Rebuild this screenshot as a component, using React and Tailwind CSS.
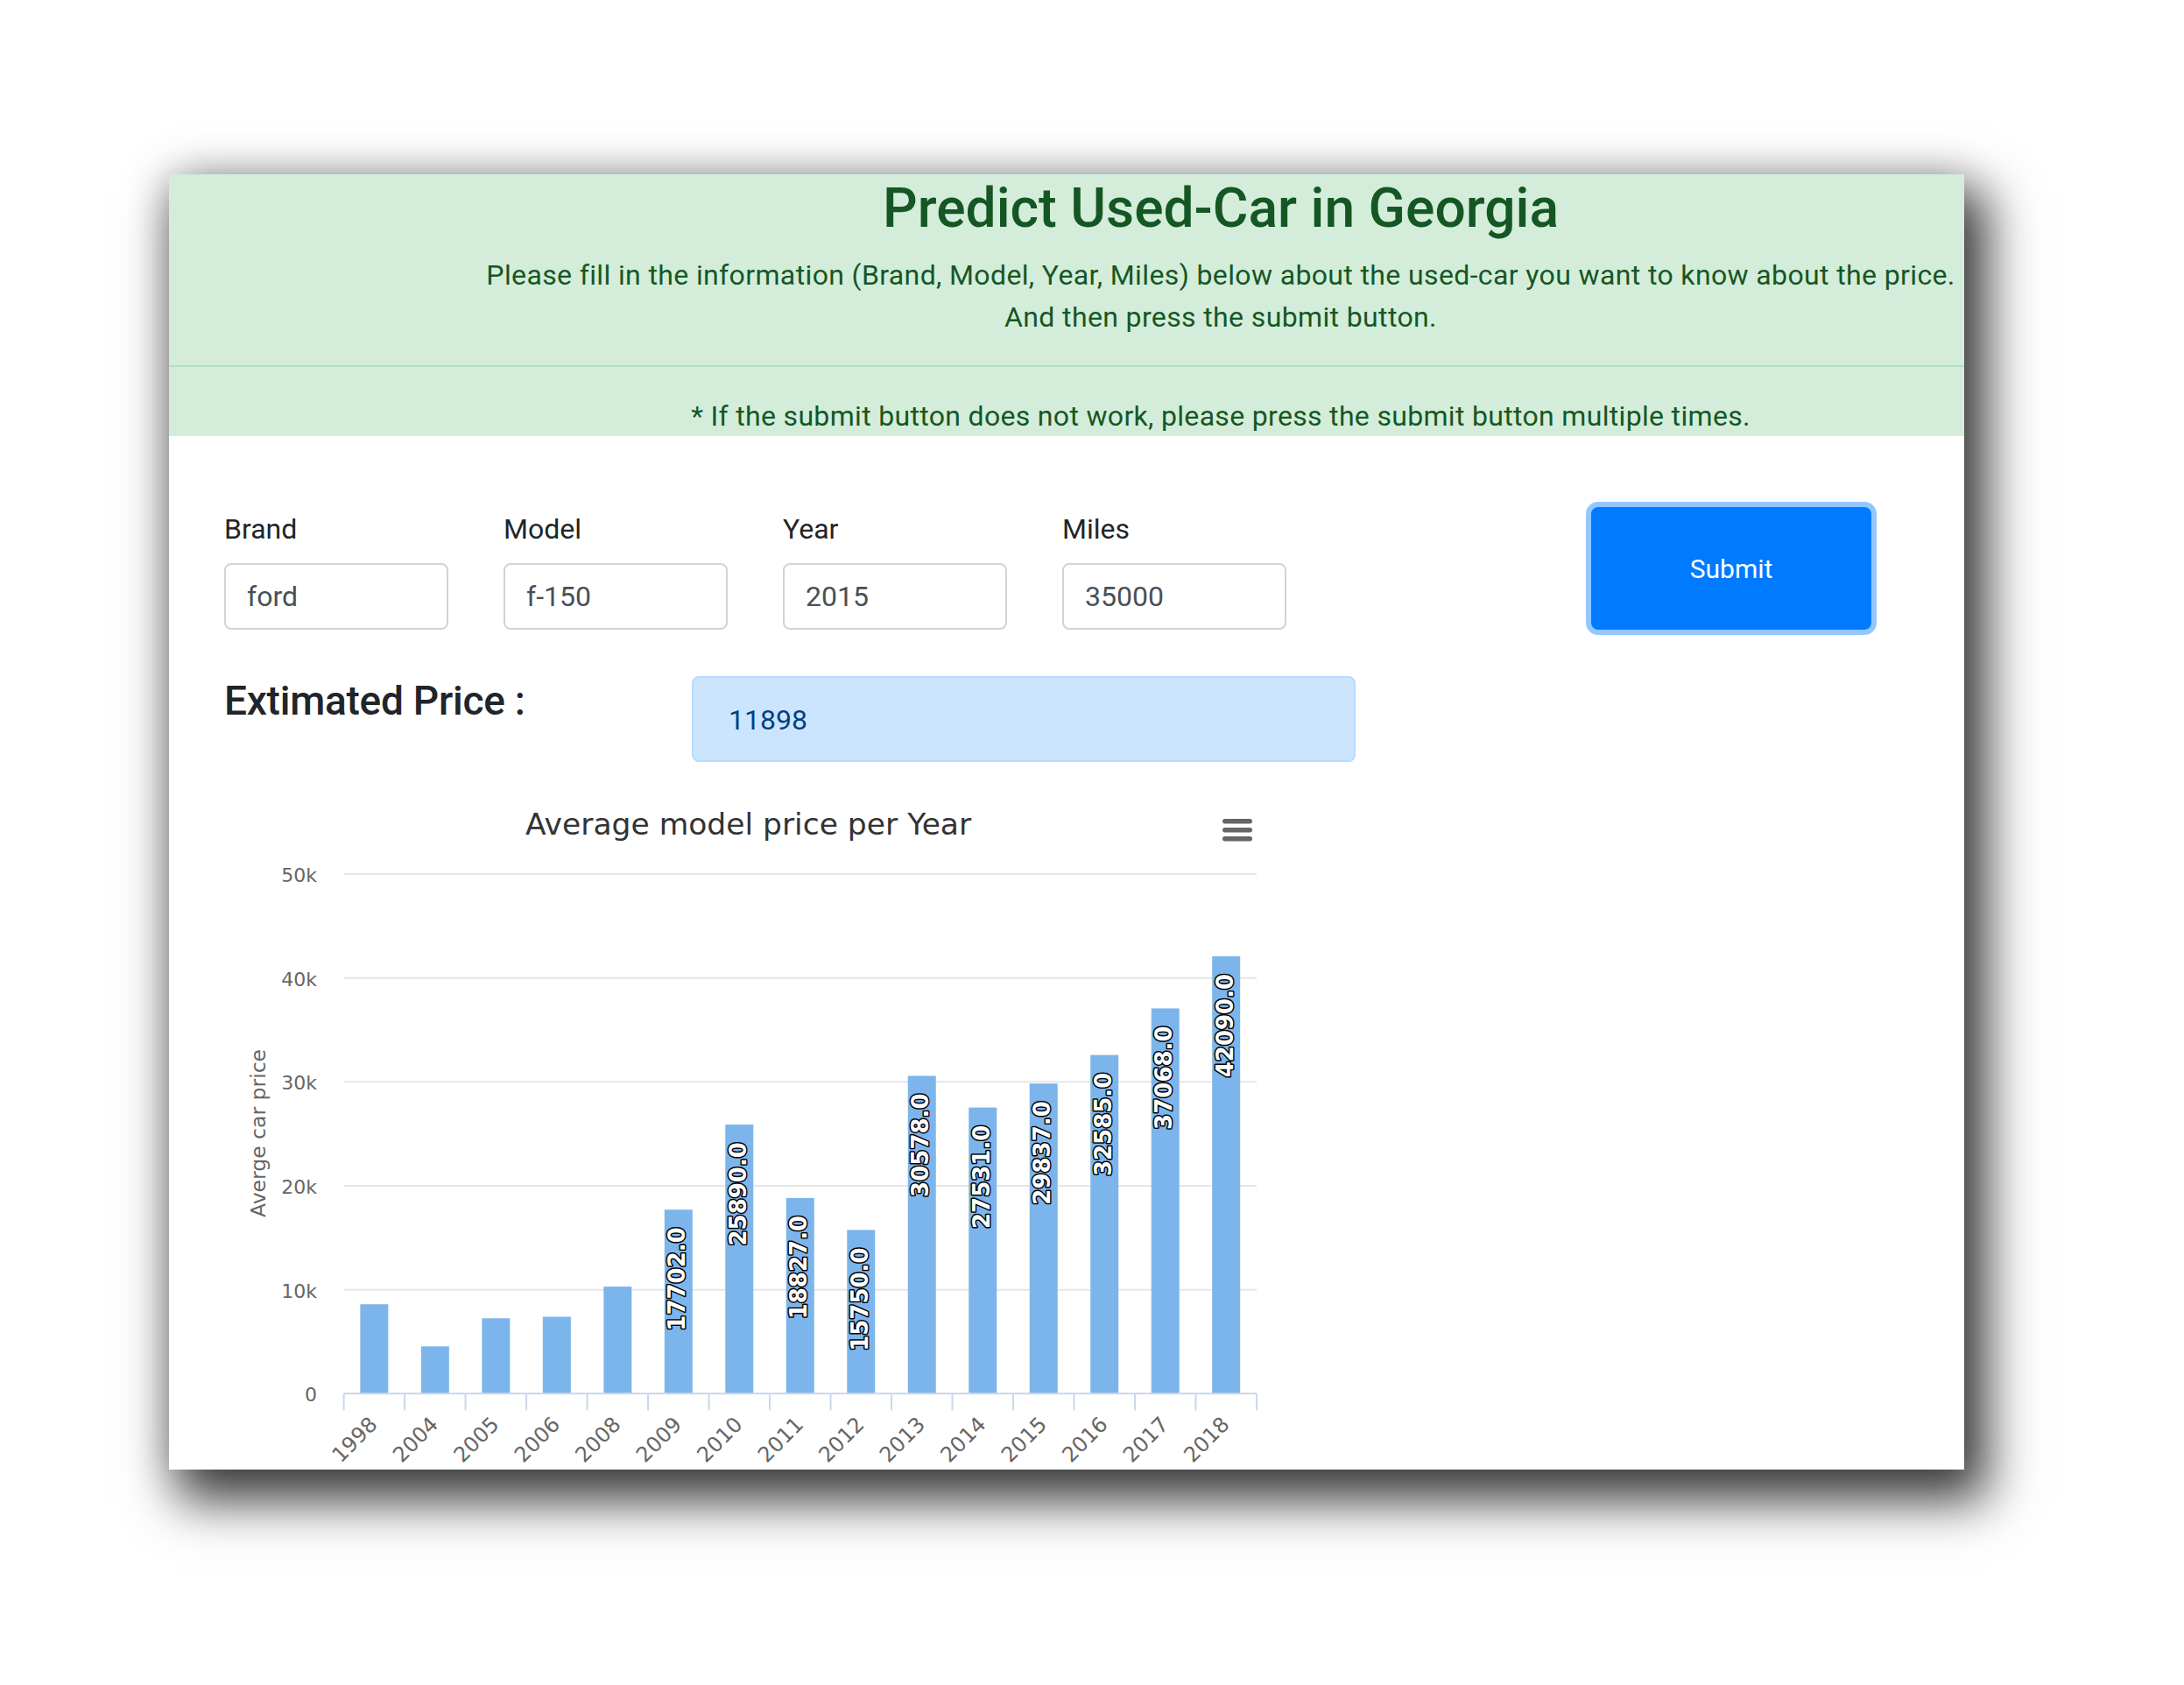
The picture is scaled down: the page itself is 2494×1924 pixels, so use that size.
import React from 'react';

const FIELDS = [
  { label: 'Brand', value: 'ford' },
  { label: 'Model', value: 'f-150' },
  { label: 'Year', value: '2015' },
  { label: 'Miles', value: '35000' },
];

const YEARS = ['1998', '2004', '2005', '2006', '2008', '2009', '2010', '2011', '2012', '2013', '2014', '2015', '2016', '2017', '2018'];
const PRICES = [8600, 4550, 7250, 7400, 10300, 17702, 25890, 18827, 15750, 30578, 27531, 29837, 32585, 37068, 42090];

// plot geometry (svg local px)
const X0 = 136.6;
const CAT = 69.49;
const Y0 = 710.3;
const STEP = 118.66; // per 10k
const BAR_W = 32;
const CHART_FONT = "'DejaVu Sans', Verdana, sans-serif";

export default function App() {
  return (
    <div className="h-[1924px] w-[2494px] overflow-hidden bg-white pl-[193px] pt-[199px] font-['Roboto',sans-serif]">
      <div className="h-[1479px] w-[2050px] overflow-hidden bg-white shadow-[18px_28px_55px_8px_rgba(0,0,0,0.75),0_0_45px_rgba(0,0,0,0.2)]">
        <Header />

        <div className="px-[63px] pt-[82px]">
          {/* Inputs + submit */}
          <div className="flex items-start">
            <div className="flex gap-[63px]">
              {FIELDS.map((f) => (
                <div key={f.label} className="w-[256px]">
                  <label className="block text-[32px] leading-[48px] text-[#212529]">{f.label}</label>
                  <input
                    readOnly
                    value={f.value}
                    className="mt-[15px] h-[76px] w-[256px] rounded-[8px] border-2 border-[#ced4da] bg-white px-[24px] text-[32px] leading-[48px] text-[#495057] outline-none"
                  />
                </div>
              ))}
            </div>
            <button className="ml-auto mr-[43px] -mt-px h-[140px] w-[320px] rounded-[8px] border-2 border-[#007bff] bg-[#007bff] text-[30px] text-white shadow-[0_0_0_6px_rgba(38,143,255,0.5)]">
              Submit
            </button>
          </div>

          {/* Result */}
          <div className="mt-[52px] flex items-start">
            <h4 className="w-[534px] text-[46px] font-medium leading-[59px] tracking-[-0.25px] text-[#212529]">Extimated Price :</h4>
            <div className="mt-px h-[98px] w-[758px] rounded-[8px] border-2 border-[#b8daff] bg-[#cce5ff] px-[40px] pt-[24px] text-[32px] leading-[48px] text-[#004085]">
              11898
            </div>
          </div>

          <PriceChart />
        </div>
      </div>
    </div>
  );
}

function Header() {
  return (
    <div className="h-[299px] bg-[#d4edda] text-[#155724]">
      <div className="flex flex-col items-center pl-[352px]">
        <h2 className="whitespace-nowrap text-[62.3px] font-medium leading-[77px]">Predict Used-Car in Georgia</h2>
        <p className="mt-[14px] whitespace-nowrap text-center text-[32px] leading-[48px] tracking-[0.37px]">
          Please fill in the information (Brand, Model, Year, Miles) below about the used-car you want to know about the price.
          <br />
          And then press the submit button.
        </p>
      </div>
      <hr className="mt-[31px] border-0 border-t-2 border-t-[#b1dfbb]" />
      <div className="mt-[32px] flex flex-col items-center pl-[352px]">
        <p className="whitespace-nowrap text-[32px] leading-[48px] tracking-[0.32px]">
          * If the submit button does not work, please press the submit button multiple times.
        </p>
      </div>
    </div>
  );
}

function PriceChart() {
  const plotRight = X0 + CAT * YEARS.length;
  const yToPx = (v) => Y0 - (v / 10000) * STEP;

  return (
    <svg width="1200" height="800" className="mt-[11px] block" fontFamily={CHART_FONT}>
      {/* title */}
      <text x="598.6" y="72" textAnchor="middle" fontSize="34.5" fill="#333333">
        Average model price per Year
      </text>

      {/* context menu */}
      <g stroke="#666666" strokeWidth="5.5" strokeLinecap="round">
        <line x1="1142.75" y1="56.7" x2="1171.25" y2="56.7" />
        <line x1="1142.75" y1="66.7" x2="1171.25" y2="66.7" />
        <line x1="1142.75" y1="76.7" x2="1171.25" y2="76.7" />
      </g>

      {/* grid + y labels */}
      {[1, 2, 3, 4, 5].map((g) => (
        <line key={g} x1={X0} x2={plotRight} y1={Y0 - g * STEP} y2={Y0 - g * STEP} stroke="#e6e6e6" strokeWidth="2" />
      ))}
      {[0, 1, 2, 3, 4, 5].map((g) => (
        <text key={g} x="106" y={Y0 - g * STEP + 9} textAnchor="end" fontSize="22" fill="#666666">
          {g === 0 ? '0' : `${g * 10}k`}
        </text>
      ))}

      {/* y axis title */}
      <text x="47" y="413" transform="rotate(-90 47 413)" textAnchor="middle" fontSize="23.5" fill="#666666">
        Averge car price
      </text>

      {/* bars */}
      {PRICES.map((v, i) => {
        const x = X0 + i * CAT + (CAT - BAR_W) / 2;
        const top = yToPx(v);
        return <rect key={i} x={x} y={top} width={BAR_W} height={Y0 - top} fill="#7cb5ec" />;
      })}

      {/* x axis */}
      <line x1={X0} x2={plotRight} y1={Y0} y2={Y0} stroke="#ccd6eb" strokeWidth="2" />
      {Array.from({ length: YEARS.length + 1 }).map((_, i) => (
        <line key={i} x1={X0 + i * CAT} x2={X0 + i * CAT} y1={Y0} y2={Y0 + 19} stroke="#ccd6eb" strokeWidth="2" />
      ))}
      {YEARS.map((y, i) => {
        const ax = X0 + i * CAT + CAT / 2 + 5;
        const ay = 747;
        return (
          <text key={y} x={ax} y={ay} transform={`rotate(-45 ${ax} ${ay})`} textAnchor="end" fontSize="24" fill="#666666">
            {y}
          </text>
        );
      })}

      {/* data labels */}
      {PRICES.map((v, i) => {
        if (i < 5) return null;
        const px = X0 + i * CAT + CAT / 2 + 7.6;
        const py = yToPx(v) + 20;
        return (
          <text
            key={i}
            x={px}
            y={py}
            transform={`rotate(-90 ${px} ${py})`}
            textAnchor="end"
            fontSize="26"
            fontWeight="bold"
            fill="#ffffff"
            stroke="#000000"
            strokeWidth="3"
            strokeLinejoin="round"
            paintOrder="stroke"
          >
            {v.toFixed(1)}
          </text>
        );
      })}
    </svg>
  );
}
